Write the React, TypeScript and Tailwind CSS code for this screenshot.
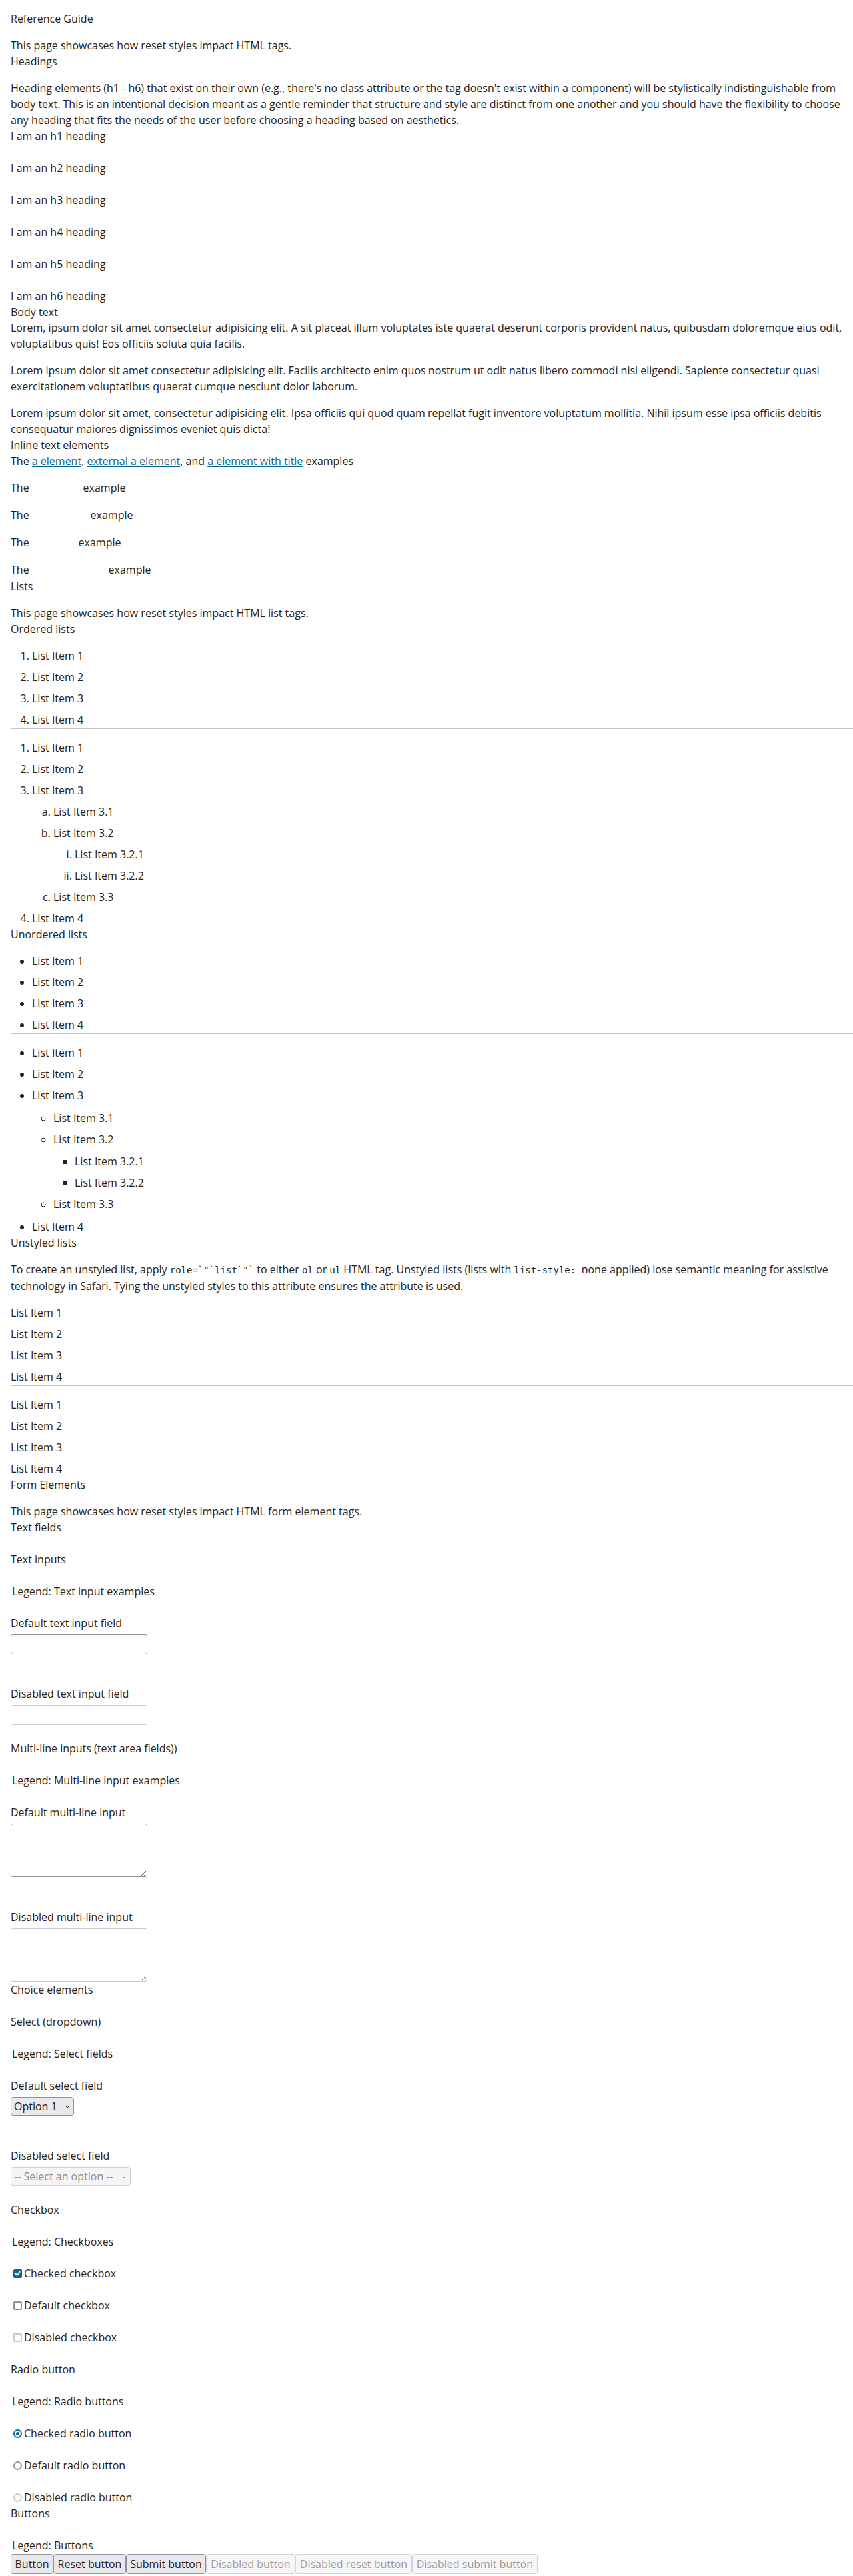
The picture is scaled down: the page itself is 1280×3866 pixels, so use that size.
import React from "react";

const Link = ({ children }: { children: React.ReactNode }) => (
  <a href="#" className="text-[#0b6a94] underline underline-offset-[2px]">
    {children}
  </a>
);

const Code = ({ children }: { children: React.ReactNode }) => (
  <code className="font-['DejaVu_Sans_Mono',monospace] text-[14px]">{children}</code>
);

const Chevron = () => (
  <svg width="8" height="5" viewBox="0 0 8 5" className="absolute right-[6px] top-[12px]">
    <path d="M1 1 L4 4 L7 1" fill="none" stroke="currentColor" strokeWidth="1" />
  </svg>
);

const Check = ({ checked, disabled, label }: { checked?: boolean; disabled?: boolean; label: string }) => (
  <label className="mt-6 flex h-6 items-center">
    <span className="relative ml-[4px] mr-[3px] inline-flex h-[13px] w-[13px]">
      <input
        type="checkbox"
        defaultChecked={checked}
        disabled={disabled}
        className={
          checked
            ? "h-[13px] w-[13px] appearance-none rounded-[2px] border-2 border-[#0b6a94] bg-[#0b6a94]"
            : disabled
            ? "h-[13px] w-[13px] appearance-none rounded-[2px] border-2 border-[#c9c9cf] bg-white"
            : "h-[13px] w-[13px] appearance-none rounded-[2px] border-2 border-[#8f8f9d] bg-white"
        }
      />
      {checked && (
        <svg width="13" height="13" viewBox="0 0 13 13" className="pointer-events-none absolute left-0 top-0">
          <path d="M3.5 6.5 L5.6 9 L9.5 3.8" fill="none" stroke="white" strokeWidth="1.8" strokeLinecap="round" strokeLinejoin="round" />
        </svg>
      )}
    </span>
    <span>{label}</span>
  </label>
);

const Radio = ({ checked, disabled, label }: { checked?: boolean; disabled?: boolean; label: string }) => (
  <label className="mt-6 flex h-6 items-center">
    <span className="relative ml-[4px] mr-[3px] inline-flex h-[13px] w-[13px]">
      <input
        type="radio"
        name="r"
        defaultChecked={checked}
        disabled={disabled}
        className={
          checked
            ? "h-[13px] w-[13px] appearance-none rounded-full border-2 border-[#0b6a94] bg-white"
            : disabled
            ? "h-[13px] w-[13px] appearance-none rounded-full border-2 border-[#c9c9cf] bg-white"
            : "h-[13px] w-[13px] appearance-none rounded-full border-2 border-[#8f8f9d] bg-white"
        }
      />
      {checked && (
        <span className="pointer-events-none absolute left-[4px] top-[4px] h-[5px] w-[5px] rounded-full bg-[#0b6a94]" />
      )}
    </span>
    <span>{label}</span>
  </label>
);

export default function App() {
  return (
    <div className="min-h-[3866px] bg-white pl-4 pt-4 font-['Open_Sans',sans-serif] text-[16px] leading-6 text-[#222222]">
      <div>Reference Guide</div>
      <p className="mt-4">This page showcases how reset styles impact HTML tags.</p>

      <div>Headings</div>
      <p className="mt-4">
        Heading elements (h1 - h6) that exist on their own (e.g., there's no class attribute or the tag doesn't exist within a
        component) will be stylistically indistinguishable from body text. This is an intentional decision meant as a gentle
        reminder that structure and style are distinct from one another and you should have the flexibility to choose any heading
        that fits the needs of the user before choosing a heading based on aesthetics.
      </p>
      <div>I am an h1 heading</div>
      <div className="mt-6">I am an h2 heading</div>
      <div className="mt-6">I am an h3 heading</div>
      <div className="mt-6">I am an h4 heading</div>
      <div className="mt-6">I am an h5 heading</div>
      <div className="mt-6">I am an h6 heading</div>

      <div>Body text</div>
      <p>
        Lorem, ipsum dolor sit amet consectetur adipisicing elit. A sit placeat illum voluptates iste quaerat deserunt corporis
        provident natus, quibusdam doloremque eius odit, voluptatibus quis! Eos officiis soluta quia facilis.
      </p>
      <p className="mt-4">
        Lorem ipsum dolor sit amet consectetur adipisicing elit. Facilis architecto enim quos nostrum ut odit natus libero commodi
        nisi eligendi. Sapiente consectetur quasi exercitationem voluptatibus quaerat cumque nesciunt dolor laborum.
      </p>
      <p className="mt-4">
        Lorem ipsum dolor sit amet, consectetur adipisicing elit. Ipsa officiis qui quod quam repellat fugit inventore voluptatum
        mollitia. Nihil ipsum esse ipsa officiis debitis consequatur maiores dignissimos eveniet quis dicta!
      </p>

      <div>Inline text elements</div>
      <p>
        The <Link>a element</Link>, <Link>external a element</Link>, and <Link>a element with title</Link> examples
      </p>
      <p className="mt-4 flex h-[25px] items-start">
        <span>The</span>
        <span className="ml-[81px]">example</span>
      </p>
      <p className="mt-4 flex h-[25px] items-start">
        <span>The</span>
        <span className="ml-[92px]">example</span>
      </p>
      <p className="mt-4 flex h-[25px] items-start">
        <span>The</span>
        <span className="ml-[74px]">example</span>
      </p>
      <p className="mt-4 flex h-[25px] items-start">
        <span>The</span>
        <span className="ml-[119px]">example</span>
      </p>

      <div>Lists</div>
      <p className="mt-4">This page showcases how reset styles impact HTML list tags.</p>
      <div>Ordered lists</div>
      <ol className="mt-4 list-decimal pl-8">
        <li>List Item 1</li>
        <li className="mt-2">List Item 2</li>
        <li className="mt-2">List Item 3</li>
        <li className="mt-2">List Item 4</li>
      </ol>
      <hr className="h-[2px] border-0 border-t border-b border-t-[#7a7a7a] border-b-[#c6c6c6]" />
      <ol className="mt-4 list-decimal pl-8">
        <li>List Item 1</li>
        <li className="mt-2">List Item 2</li>
        <li className="mt-2">
          List Item 3
          <ol className="mt-2 list-[lower-alpha] pl-8">
            <li>List Item 3.1</li>
            <li className="mt-2">
              List Item 3.2
              <ol className="mt-2 list-[lower-roman] pl-8">
                <li>List Item 3.2.1</li>
                <li className="mt-2">List Item 3.2.2</li>
              </ol>
            </li>
            <li className="mt-2">List Item 3.3</li>
          </ol>
        </li>
        <li className="mt-2">List Item 4</li>
      </ol>

      <div>Unordered lists</div>
      <ul className="mt-4 list-disc pl-8">
        <li>List Item 1</li>
        <li className="mt-2">List Item 2</li>
        <li className="mt-2">List Item 3</li>
        <li className="mt-2">List Item 4</li>
      </ul>
      <hr className="h-[2px] border-0 border-t border-b border-t-[#7a7a7a] border-b-[#c6c6c6]" />
      <ul className="mt-4 list-disc pl-8">
        <li>List Item 1</li>
        <li className="mt-2">List Item 2</li>
        <li className="mt-2">
          List Item 3
          <ul className="mt-[10px] list-[circle] pl-8">
            <li>List Item 3.1</li>
            <li className="mt-2">
              List Item 3.2
              <ul className="mt-[9px] list-[square] pl-8">
                <li>List Item 3.2.1</li>
                <li className="mt-2">List Item 3.2.2</li>
              </ul>
            </li>
            <li className="mt-2">List Item 3.3</li>
          </ul>
        </li>
        <li className="mt-[10px]">List Item 4</li>
      </ul>

      <div>Unstyled lists</div>
      <p className="mt-4">
        <span>To create an unstyled list, apply </span>
        <Code>role=`"`list`"`</Code>
        <span> to either </span>
        <Code>ol</Code>
        <span> or </span>
        <Code>ul</Code>
        <span> HTML tag. Unstyled lists (lists with </span>
        <Code>list-style: </Code>
        <span>none applied) lose semantic meaning for assistive</span>{" "}
        <span>technology in Safari. Tying the unstyled styles to this attribute ensures the attribute is used.</span>
      </p>
      <ul className="mt-4" role="list">
        <li>List Item 1</li>
        <li className="mt-2">List Item 2</li>
        <li className="mt-2">List Item 3</li>
        <li className="mt-2">List Item 4</li>
      </ul>
      <hr className="h-[2px] border-0 border-t border-b border-t-[#7a7a7a] border-b-[#c6c6c6]" />
      <ul className="mt-4" role="list">
        <li>List Item 1</li>
        <li className="mt-2">List Item 2</li>
        <li className="mt-2">List Item 3</li>
        <li className="mt-2">List Item 4</li>
      </ul>

      <div>Form Elements</div>
      <p className="mt-4">This page showcases how reset styles impact HTML form element tags.</p>
      <div>Text fields</div>
      <div className="mt-6">Text inputs</div>
      <div className="mt-6 pl-[2px]">Legend: Text input examples</div>
      <label className="mt-6 block">Default text input field</label>
      <input
        type="text"
        className="mt-[5px] block h-[30px] w-[205px] rounded-[3px] border border-[#8f8f9d] bg-white px-[2px]"
      />
      <label className="mt-[47px] block">Disabled text input field</label>
      <input
        type="text"
        disabled
        className="mt-[5px] block h-[30px] w-[205px] rounded-[3px] border border-[#c9c9cf] bg-white px-[2px]"
      />
      <div className="mt-[23px]">Multi-line inputs (text area fields))</div>
      <div className="mt-6 pl-[2px]">Legend: Multi-line input examples</div>
      <label className="mt-6 block">Default multi-line input</label>
      <textarea className="mt-[5px] block h-[80px] w-[205px] rounded-[3px] border border-[#8f8f9d] bg-white" />
      <label className="mt-12 block">Disabled multi-line input</label>
      <textarea disabled className="mt-[5px] block h-[80px] w-[205px] rounded-[3px] border border-[#c9c9cf] bg-white" />

      <div>Choice elements</div>
      <div className="mt-6">Select (dropdown)</div>
      <div className="mt-6 pl-[2px]">Legend: Select fields</div>
      <label className="mt-6 block">Default select field</label>
      <div className="relative mt-[5px] w-[95px] text-[#222222]">
        <select className="block h-[28px] w-[95px] appearance-none rounded-[4px] border border-[#8f8f9d] bg-[#e9e9ed] pl-[4px] leading-[26px]">
          <option>Option 1</option>
        </select>
        <Chevron />
      </div>
      <label className="mt-12 block">Disabled select field</label>
      <div className="relative mt-[5px] w-[180px] text-[#8a8a8e]">
        <select
          disabled
          className="block h-[28px] w-[180px] appearance-none rounded-[4px] border border-[#cfcfd5] bg-[#f5f5f7] pl-[4px] leading-[26px] text-[#8a8a8e]"
        >
          <option>-- Select an option --</option>
        </select>
        <Chevron />
      </div>

      <div className="mt-6">Checkbox</div>
      <div className="mt-6 pl-[2px]">Legend: Checkboxes</div>
      <Check checked label="Checked checkbox" />
      <Check label="Default checkbox" />
      <Check disabled label="Disabled checkbox" />

      <div className="mt-6">Radio button</div>
      <div className="mt-6 pl-[2px]">Legend: Radio buttons</div>
      <Radio checked label="Checked radio button" />
      <Radio label="Default radio button" />
      <Radio disabled label="Disabled radio button" />

      <div>Buttons</div>
      <div className="mt-6 pl-[2px]">Legend: Buttons</div>
      <div className="mt-[1px] flex">
        <button className="h-[30px] w-[64px] rounded-[4px] border border-[#8f8f9d] bg-[#e9e9ed] text-[#222222]">Button</button>
        <button className="h-[30px] w-[109px] rounded-[4px] border border-[#8f8f9d] bg-[#e9e9ed] text-[#222222]">Reset button</button>
        <button className="h-[30px] w-[120px] rounded-[4px] border border-[#8f8f9d] bg-[#e9e9ed] text-[#222222]">Submit button</button>
        <button disabled className="h-[30px] w-[134px] rounded-[4px] border border-[#d2d2d8] bg-[#f6f6f8] text-[#9a9a9e]">Disabled button</button>
        <button disabled className="h-[30px] w-[175px] rounded-[4px] border border-[#d2d2d8] bg-[#f6f6f8] text-[#9a9a9e]">Disabled reset button</button>
        <button disabled className="h-[30px] w-[189px] rounded-[4px] border border-[#d2d2d8] bg-[#f6f6f8] text-[#9a9a9e]">Disabled submit button</button>
      </div>
    </div>
  );
}
